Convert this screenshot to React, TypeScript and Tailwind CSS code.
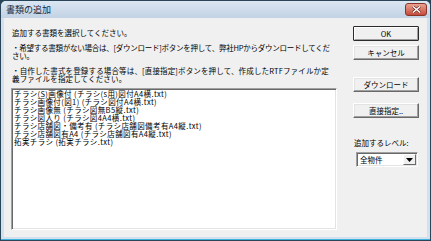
const items = [
  "チラシ(S)画像付 (チラシ(s用)図付A4横.txt)",
  "チラシ画像付(図1) (チラシ図付A4横.txt)",
  "チラシ画像無 (チラシ図無B5縦.txt)",
  "チラシ図入り (チラシ図4A4横.txt)",
  "チラシ店舗図・備考有 (チラシ店舗図備考有A4縦.txt)",
  "チラシ店舗図有A4 (チラシ店舗図有A4縦.txt)",
  "拓実チラシ (拓実チラシ.txt)",
]

function Button({ label, isDefault, className }: { label: string; isDefault?: boolean; className?: string }) {
  if (isDefault) {
    return (
      <div className={`h-[15px] rounded-[1px] border border-[#2b2b2b] ${className ?? ""}`}>
        <div className="flex h-full items-center justify-center border border-t-white border-l-white border-r-[#a0a0a0] border-b-[#a0a0a0] bg-[#f0f0f0]">
          {label}
        </div>
      </div>
    )
  }
  return (
    <div
      className={`flex h-[15px] items-center justify-center border border-t-white border-l-white border-r-[#696969] border-b-[#696969] bg-[#f0f0f0] shadow-[inset_-1px_-1px_0_#a0a0a0,inset_1px_1px_0_#e3e3e3] ${className ?? ""}`}
    >
      {label}
    </div>
  )
}

export default function App() {
  return (
    <div className="h-[241px] w-[431px] bg-[#2a4458] p-px font-['Noto_Sans_CJK_JP','Noto_Sans',sans-serif] text-[7.5px] leading-[8px] text-black">
      <div className="flex h-full flex-col rounded-t-[5px] bg-[#d3e0ed]">
        {/* title bar */}
        <div className="flex h-[17px] items-center justify-between rounded-t-[5px] bg-gradient-to-b from-[#dbe6f2] to-[#c2d2e4] pl-[5px] pr-[3px]">
          <span className="text-[9px] leading-[10px] text-[#15283c]">書類の追加</span>
          <div className="flex h-[13px] w-[22px] items-center justify-center rounded-[3px] border border-[#8a3328] bg-gradient-to-b from-[#e8a393] to-[#c4483a]">
            <svg width="9" height="7" viewBox="0 0 9 7">
              <path d="M1 0.5 L8 6.5 M8 0.5 L1 6.5" stroke="#5a1a12" strokeWidth="2.6" />
              <path d="M1 0.5 L8 6.5 M8 0.5 L1 6.5" stroke="#ffffff" strokeWidth="1.5" />
            </svg>
          </div>
        </div>

        {/* client area */}
        <div className="mx-[3px] flex flex-1 bg-[#f0f0f0] pb-[7px] pl-[7px] pt-[8px]">
          <div className="flex w-[326px] flex-col">
            <p className="mt-[3px] whitespace-nowrap pl-px">追加する書類を選択してください。</p>
            <p className="mt-[7px] whitespace-nowrap pl-px tracking-[-0.25px]">
              ・希望する書類がない場合は、[ダウンロード]ボタンを押して、弊社HPからダウンロードしてくだ
              <br />
              さい。
            </p>
            <p className="mt-[7px] whitespace-nowrap pl-px tracking-[0.15px]">
              ・自作した書式を登録する場合等は、[直接指定]ボタンを押して、作成したRTFファイルか定
              <br />
              義ファイルを指定してください。
            </p>
            <div className="mt-[5px] flex-1 border border-t-[#a0a0a0] border-l-[#a0a0a0] border-r-white border-b-white bg-white pl-[2px] pt-px shadow-[inset_1px_1px_0_#696969,inset_-1px_-1px_0_#e3e3e3]">
              {items.map((it) => (
                <div key={it} className="whitespace-nowrap tracking-[0.4px]">
                  {it}
                </div>
              ))}
            </div>
          </div>

          <div className="ml-[16px] flex w-[66px] flex-col">
            <Button label="OK" isDefault />
            <Button label="キャンセル" className="mt-[4px]" />
            <Button label="ダウンロード" className="mt-[17px]" />
            <Button label="直接指定.." className="mt-[11px]" />
            <p className="mt-[21px] pl-px">追加するレベル:</p>
            <div className="ml-[3px] mt-[5px] flex h-[15px] w-[62px] items-center border border-t-[#a0a0a0] border-l-[#a0a0a0] border-r-white border-b-white bg-white shadow-[inset_1px_1px_0_#696969,inset_-1px_-1px_0_#e3e3e3]">
              <span className="flex-1 pl-[3px]">全物件</span>
              <div className="mr-px flex h-[11px] w-[13px] items-center justify-center border border-t-white border-l-white border-r-[#696969] border-b-[#696969] bg-[#f0f0f0]">
                <svg width="7" height="4" viewBox="0 0 7 4">
                  <path d="M0 0 H7 L3.5 4 Z" fill="#000" />
                </svg>
              </div>
            </div>
          </div>
        </div>
        <div className="h-[2px] bg-[#d3e0ed]" />
        <div className="h-px bg-[#3fb2dc]" />
      </div>
    </div>
  )
}
